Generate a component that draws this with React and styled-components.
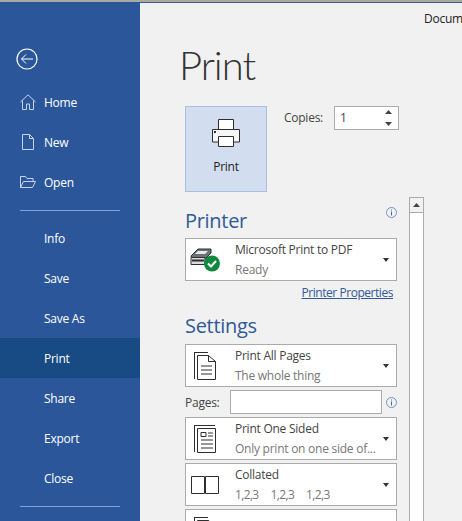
import styled, { createGlobalStyle } from "styled-components";

const Global = createGlobalStyle`
  html, body { margin: 0; padding: 0; }
  body {
    width: 462px;
    height: 521px;
    overflow: hidden;
    background: #f1f1f1;
    font-family: "Open Sans", "Liberation Sans", sans-serif;
    letter-spacing: -0.25px;
  }
`;

const Page = styled.div`
  width: 462px;
  height: 521px;
  display: flex;
  flex-direction: column;
  overflow: hidden;
`;

const TopStrip = styled.div`
  height: 2px;
  flex: none;
  background: #a9a9a1;
`;

const Body = styled.div`
  flex: 1;
  display: flex;
  min-height: 0;
`;

const Sidebar = styled.nav`
  width: 140px;
  flex: none;
  background: #2b579a;
  color: #fff;
  display: flex;
  flex-direction: column;
`;

const Back = styled.div`
  height: 40px;
  margin: 37px 0 3px;
  padding-left: 16px;
  display: flex;
  align-items: center;
  flex: none;
`;

const Item = styled.div`
  height: 40px;
  flex: none;
  display: flex;
  align-items: center;
  font-size: 12px;
  background: ${p => (p.$active ? "#184a83" : "transparent")};
`;

const ItemIcon = styled.span`
  width: 44px;
  flex: none;
  display: flex;
  justify-content: center;
  padding-left: 12px;
  box-sizing: border-box;
`;

const Rule = styled.div`
  height: 1px;
  margin: 8px 20px 7px;
  background: #7ba2dc;
  flex: none;
`;

const Main = styled.main`
  flex: 1;
  min-width: 0;
  position: relative;
  display: flex;
  flex-direction: column;
  padding-left: 41px;
  border-top: 1px solid #3b5b92;
`;

const DocName = styled.div`
  position: absolute;
  top: 7px;
  left: 284px;
  font-size: 12px;
  color: #222;
  white-space: nowrap;
`;

const Title = styled.h1`
  margin: 36px 0 0 -2px;
  height: 67px;
  flex: none;
  font: 300 40px/52px Lato, "Open Sans", sans-serif;
  letter-spacing: -1px;
  color: #333;
`;

const PrintRow = styled.div`
  display: flex;
  margin-left: 4px;
  height: 86px;
  flex: none;
`;

const PrintButton = styled.div`
  width: 82px;
  height: 86px;
  box-sizing: border-box;
  background: #d2deef;
  border: 1px solid #a9bfdf;
  display: flex;
  flex-direction: column;
  align-items: center;
  padding-top: 12px;
  font-size: 12px;
  color: #222;
  gap: 11px;
`;

const Copies = styled.div`
  display: flex;
  align-items: flex-start;
  margin-left: 17px;
  font-size: 12px;
  color: #444;
  gap: 11px;
  line-height: 24px;
`;

const Spin = styled.div`
  width: 65px;
  height: 24px;
  box-sizing: border-box;
  border: 1px solid #ababab;
  background: #fff;
  display: flex;
  justify-content: space-between;
  align-items: center;
  padding: 0 6px 0 5px;
  color: #444;
  line-height: 22px;
`;

const Arrows = styled.span`
  display: flex;
  flex-direction: column;
  gap: 8px;
`;

const Columns = styled.div`
  display: flex;
  margin-left: 4px;
  gap: 12px;
  flex: 1;
  min-height: 0;
`;

const Settings = styled.div`
  width: 212px;
  flex: none;
  display: flex;
  flex-direction: column;
  position: relative;
`;

const Heading = styled.h2`
  margin: 0;
  box-sizing: border-box;
  font: 400 20px/27px "Open Sans", sans-serif;
  letter-spacing: -0.3px;
  color: #2f5a96;
  height: ${p => p.$h}px;
  padding-top: ${p => p.$pad || 0}px;
  flex: none;
`;

const CornerInfo = styled.span`
  position: absolute;
  right: 0;
  top: 15px;
`;

const Drop = styled.div`
  height: 43px;
  flex: none;
  box-sizing: border-box;
  background: #fff;
  border: 1px solid #ababab;
  display: flex;
  align-items: center;
  margin-bottom: 3px;
`;

const DropIcon = styled.span`
  width: 49px;
  flex: none;
  display: flex;
  padding-left: ${p => p.$pad}px;
  box-sizing: border-box;
`;

const DropText = styled.div`
  flex: 1;
  min-width: 0;
  font-size: 12px;
  line-height: 20px;
  color: #444;
  white-space: nowrap;
`;

const Sub = styled.div`
  color: #777;
`;

const Numbers = styled.div`
  display: flex;
  gap: 12px;
  color: #777;
  letter-spacing: -0.65px;
`;

const Caret = styled.span`
  width: 0;
  height: 0;
  flex: none;
  margin-right: 7px;
  border-left: 3.5px solid transparent;
  border-right: 3.5px solid transparent;
  border-top: 4px solid #333;
`;

const PropertiesLink = styled.a`
  align-self: flex-end;
  margin-right: 4px;
  height: 28px;
  font-size: 12px;
  line-height: 18px;
  letter-spacing: -0.45px;
  color: #2f5a96;
  text-decoration: underline;
  flex: none;
`;

const PagesRow = styled.div`
  display: flex;
  align-items: center;
  height: 24px;
  margin-bottom: 3px;
  flex: none;
  font-size: 12px;
  color: #444;
`;

const PagesInput = styled.div`
  width: 152px;
  height: 24px;
  box-sizing: border-box;
  background: #fff;
  border: 1px solid #ababab;
  margin: 0 4px 0 auto;
`;

const ScrollBar = styled.div`
  width: 15px;
  flex: none;
  box-sizing: border-box;
  background: #fff;
  border: 1px solid #ababab;
  margin-top: 5px;
  margin-bottom: -4px;
`;

const ScrollUp = styled.div`
  height: 14px;
  border-bottom: 1px solid #ababab;
  background: #f1f1f1;
  display: flex;
  align-items: center;
  justify-content: center;
`;

const Glyph = styled.svg`
  display: block;
  flex: none;
  fill: none;
  stroke: ${p => p.$stroke || "#2e2e2e"};
  stroke-width: 1;
`;

const navLight = "#c5d5ef";

const HomeIcon = () => (
  <Glyph width="16" height="16" viewBox="0 0 16 16" $stroke={navLight}>
    <path d="M.5 8 8 .8 15.500 8M2.500 6.500v9h4V10h3v5.500h4v-9" />
  </Glyph>
);

const NewIcon = () => (
  <Glyph width="12" height="16" viewBox="0 0 12 16" $stroke={navLight}>
    <path d="M.5.500h7l4 4v11H.5zM7.500.500v4h4" />
  </Glyph>
);

const OpenIcon = () => (
  <Glyph width="16" height="12" viewBox="0 0 16 12" $stroke={navLight}>
    <path d="M.5 11.500V.5h5l1.500 2h6v2.500M.5 11.500l3-6h12l-3 6z" />
  </Glyph>
);

const BackIcon = () => (
  <Glyph width="22" height="22" viewBox="0 0 22 22" $stroke="#fff">
    <circle cx="11" cy="11" r="10" strokeWidth="1.2" />
    <path d="M17 11H5.500M10 6.500 5.500 11l4.500 4.500" />
  </Glyph>
);

const PrinterIcon = () => (
  <Glyph width="28" height="28" viewBox="0 0 28 28">
    <path d="M6.500 10V.5h15V10" fill="#fff" />
    <path d="M.5 10.500h27v12.500h-6v-3h-15v3h-6z" fill="#f7f7f7" />
    <path d="M6.500 17.500h15v10h-15z" fill="#fff" />
    <rect x="2" y="12" width="2" height="2" fill="#2e2e2e" stroke="none" />
  </Glyph>
);

const InfoIcon = () => (
  <Glyph width="11" height="11" viewBox="0 0 11 11" $stroke="#6f93c8">
    <circle cx="5.500" cy="5.500" r="5" />
    <path d="M5.500 4.500v4M5.500 2.500v1" stroke="#44689f" />
  </Glyph>
);

const DevicePrinterIcon = () => (
  <Glyph width="31" height="24" viewBox="0 0 31 24">
    <path d="M1 8 8 1h13v4L15 11H2z" fill="#6c7278" stroke="#2e2e2e" />
    <path d="M8 3h10l-3 3H5z" fill="#e8e8e8" stroke="none" />
    <path d="M1 9.500h14v7H1z" fill="#dcdcdc" stroke="#2e2e2e" />
    <path d="M2 12.500h12" stroke="#2e2e2e" strokeWidth="2" />
    <path d="M15 16 21 10" stroke="#2e2e2e" />
    <circle cx="22" cy="15.500" r="8" fill="#10893e" stroke="none" />
    <path d="M18 15.500l3 3 5-5.500" stroke="#fff" strokeWidth="2" />
  </Glyph>
);

const PagesIcon = () => (
  <Glyph width="23" height="28" viewBox="0 0 23 28">
    <path d="M.5 0v27M0 .5h14M3.500 27.500V3.500h11l7 6v18z" />
    <path d="M14.500 3.500v6h7M7 14h11M7 18h11M7 22h11" />
  </Glyph>
);

const SidedIcon = () => (
  <Glyph width="23" height="28" viewBox="0 0 23 28">
    <path d="M.5 0v27M0 .5h21M3.500 3.500h18v24h-18z" />
    <path d="M7 7.500h5v4H7zM14 8h5M14 11h5M7 15h12M7 19h12M7 23h12" />
  </Glyph>
);

const CollateIcon = () => (
  <Glyph width="28" height="18" viewBox="0 0 28 18">
    <path d="M.5.500h13v17H.5zM14.500.500h13v17h-13z" />
  </Glyph>
);

const Arrow = ({ up }) => (
  <Glyph width="7" height="4" viewBox="0 0 7 4">
    <path d={up ? "M0 4 3.500 0 7 4z" : "M0 0 3.500 4 7 0z"} fill="#444" stroke="none" />
  </Glyph>
);

const navTop = [
  { label: "Home", icon: <HomeIcon /> },
  { label: "New", icon: <NewIcon /> },
  { label: "Open", icon: <OpenIcon /> },
];
const navBottom = ["Info", "Save", "Save As", "Print", "Share", "Export", "Close"];

export default function App() {
  return (
    <Page>
      <Global />
      <TopStrip />
      <Body>
        <Sidebar>
          <Back><BackIcon /></Back>
          {navTop.map(n => (
            <Item key={n.label}>
              <ItemIcon>{n.icon}</ItemIcon>
              {n.label}
            </Item>
          ))}
          <Rule />
          {navBottom.map(label => (
            <Item key={label} $active={label === "Print"}>
              <ItemIcon />
              {label}
            </Item>
          ))}
          <Rule />
        </Sidebar>
        <Main>
          <DocName>Document1 - Word</DocName>
          <Title>Print</Title>
          <PrintRow>
            <PrintButton>
              <PrinterIcon />
              Print
            </PrintButton>
            <Copies>
              Copies:
              <Spin>
                1
                <Arrows><Arrow up /><Arrow /></Arrows>
              </Spin>
            </Copies>
          </PrintRow>
          <Columns>
            <Settings>
              <CornerInfo><InfoIcon /></CornerInfo>
              <Heading $h={46} $pad={15}>Printer</Heading>
              <Drop>
                <DropIcon $pad={4}><DevicePrinterIcon /></DropIcon>
                <DropText>
                  Microsoft Print to PDF
                  <Sub>Ready</Sub>
                </DropText>
                <Caret />
              </Drop>
              <PropertiesLink>Printer Properties</PropertiesLink>
              <Heading $h={32}>Settings</Heading>
              <Drop>
                <DropIcon $pad={8}><PagesIcon /></DropIcon>
                <DropText>
                  Print All Pages
                  <Sub>The whole thing</Sub>
                </DropText>
                <Caret />
              </Drop>
              <PagesRow>
                Pages:
                <PagesInput />
                <InfoIcon />
              </PagesRow>
              <Drop>
                <DropIcon $pad={8}><SidedIcon /></DropIcon>
                <DropText>
                  Print One Sided
                  <Sub>Only print on one side of...</Sub>
                </DropText>
                <Caret />
              </Drop>
              <Drop>
                <DropIcon $pad={5}><CollateIcon /></DropIcon>
                <DropText>
                  Collated
                  <Numbers><span>1,2,3</span><span>1,2,3</span><span>1,2,3</span></Numbers>
                </DropText>
                <Caret />
              </Drop>
              <Drop>
                <DropIcon $pad={8}><PagesIcon /></DropIcon>
              </Drop>
            </Settings>
            <ScrollBar>
              <ScrollUp><Arrow up /></ScrollUp>
            </ScrollBar>
          </Columns>
        </Main>
      </Body>
    </Page>
  );
}
